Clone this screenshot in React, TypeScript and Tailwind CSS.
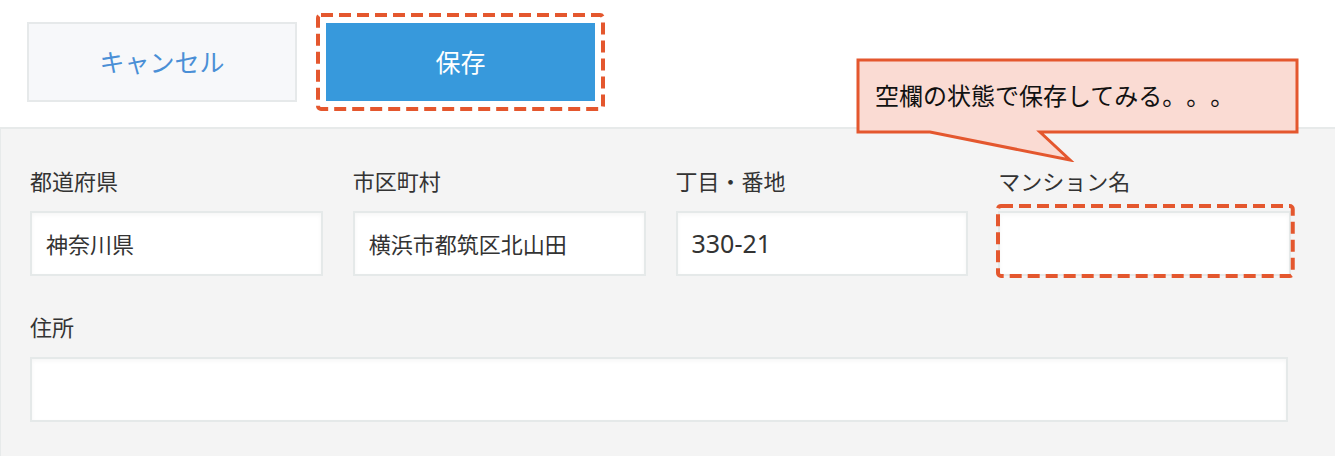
import React from 'react';

const font = { fontFamily: '"Noto Sans CJK JP", "Noto Sans", sans-serif' };

const DashedBox: React.FC<{ className: string }> = ({ className }) => (
  <svg className={`pointer-events-none absolute ${className}`} width="100%" height="100%" preserveAspectRatio="none">
    <rect x="2" y="2" width="calc(100% - 4px)" height="calc(100% - 4px)" rx="3" fill="none" stroke="#e4572e" strokeWidth="4" strokeDasharray="12 6" />
  </svg>
);

const Field: React.FC<{ label: string; value?: React.ReactNode; highlight?: boolean }> = ({ label, value, highlight }) => (
  <div className="flex flex-col">
    <label className="h-[30px] text-[22px] leading-[26px] text-[#333]">{label}</label>
    <div className="relative mt-[14px]">
      <div className="flex h-[65px] items-center border-2 border-[#e5e9e9] bg-white px-[14px] text-[22px] text-[#333] shadow-[inset_0_2px_4px_rgba(0,0,0,0.04)]">
        {value}
      </div>
      {highlight && <DashedBox className="-left-[2px] -right-[2px] -top-[7px] -bottom-[2px] h-[calc(100%+9px)] w-[calc(100%+6px)]" />}
    </div>
  </div>
);

const App: React.FC = () => {
  return (
    <div className="relative h-[456px] w-[1335px] overflow-hidden bg-white" style={font}>
      <div className="flex h-[127px] items-start gap-[29px] pl-[27px] pt-[22px]">
        <button className="h-[80px] w-[270px] border-2 border-[#e6e9ea] bg-[#f7f8fa] text-[25px] text-[#4a8fd6]">
          キャンセル
        </button>
        <div className="relative mt-[1px]">
          <button className="h-[78px] w-[269px] bg-[#3799dc] text-[25px] text-white">保存</button>
          <DashedBox className="-left-[10px] -top-[10px] h-[98px] w-[289px]" />
        </div>
      </div>

      <div className="h-[329px] border-t-2 border-l border-[#e7eaea] bg-[#f4f4f4] pl-[29px] pt-[38px]">
        <div className="grid w-[1261px] grid-cols-4 gap-[30px]">
          <Field label="都道府県" value="神奈川県" />
          <Field label="市区町村" value="横浜市都筑区北山田" />
          <Field label="丁目・番地" value={<span className="text-[25px]" style={{ fontFamily: '"Noto Sans", sans-serif' }}>330-21</span>} />
          <Field label="マンション名" highlight />
        </div>
        <div className="mt-[37px] w-[1258px]">
          <Field label="住所" />
        </div>
      </div>

      <div className="absolute left-[856px] top-[58px] h-[104px] w-[443px]">
        <svg className="absolute inset-0" width="443" height="104">
          <path d="M2 2 H441 V74 H184 L214 102 L74 74 H2 Z" fill="#fadbd3" stroke="#e4572e" strokeWidth="3" strokeLinejoin="miter" />
        </svg>
        <div className="absolute left-[19px] top-[20px] text-[24px] leading-[34px] text-[#111] [text-spacing-trim:space-all]">
          空欄の状態で保存してみる。。。
        </div>
      </div>
    </div>
  );
};

export default App;
